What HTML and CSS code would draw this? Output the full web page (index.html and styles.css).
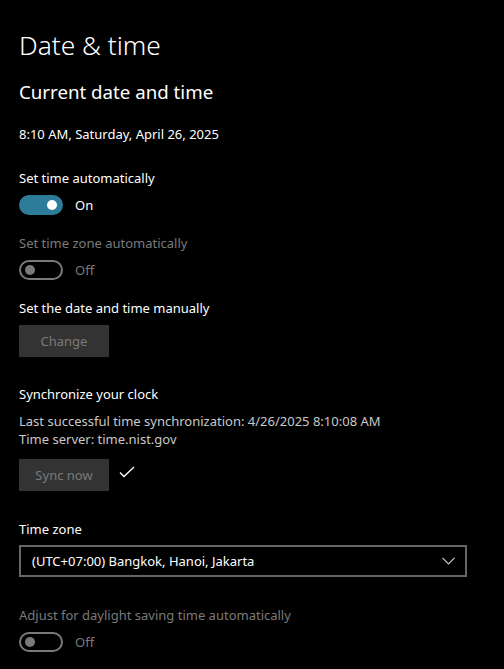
FILE: index.html
```html
<!DOCTYPE html>
<html lang="en">
<head>
  <meta charset="UTF-8" />
  <title>Date &amp; time</title>
  <link rel="stylesheet" href="styles.css">
</head>
<body>
  <main class="page">
    <h1 class="page-title">Date &amp; time</h1>

    <section class="group">
      <h2 class="group-title">Current date and time</h2>
      <p class="now">8:10 AM, Saturday, April 26, 2025</p>
    </section>

    <!-- Automatic settings -->
    <div class="setting">
      <div class="label">Set time automatically</div>
      <div class="toggle-row">
        <span class="toggle on"><span class="knob"></span></span>
        <span class="state">On</span>
      </div>
    </div>

    <div class="setting disabled">
      <div class="label">Set time zone automatically</div>
      <div class="toggle-row">
        <span class="toggle"><span class="knob"></span></span>
        <span class="state">Off</span>
      </div>
    </div>

    <div class="setting">
      <div class="label">Set the date and time manually</div>
      <button class="btn" disabled>Change</button>
    </div>

    <!-- Sync -->
    <div class="setting sync">
      <div class="label">Synchronize your clock</div>
      <div class="info">
        <div>Last successful time synchronization: 4/26/2025 8:10:08 AM</div>
        <div>Time server: time.nist.gov</div>
      </div>
      <div class="btn-row">
        <button class="btn" disabled>Sync now</button>
        <svg class="check" width="16" height="12" viewBox="0 0 16 12">
          <path d="M1 6.5 L5 10.5 L15 1" fill="none" stroke="#fff" stroke-width="1.3"/>
        </svg>
      </div>
    </div>

    <div class="setting zone">
      <div class="label">Time zone</div>
      <div class="select">
        <span>(UTC+07:00) Bangkok, Hanoi, Jakarta</span>
        <svg width="13" height="8" viewBox="0 0 13 8">
          <path d="M0.5 0.8 L6.5 6.8 L12.5 0.8" fill="none" stroke="#c8c8c8" stroke-width="1.2"/>
        </svg>
      </div>
    </div>

    <div class="setting disabled last">
      <div class="label">Adjust for daylight saving time automatically</div>
      <div class="toggle-row">
        <span class="toggle"><span class="knob"></span></span>
        <span class="state">Off</span>
      </div>
    </div>
  </main>
</body>
</html>
```

FILE: styles.css
```css
*, *::before, *::after {
  box-sizing: border-box;
}
body {
  margin: 0;
  background: #000;
  color: #fff;
  font-family: "Noto Sans", "Open Sans", sans-serif;
  font-size: 13px;
  line-height: 20px;
  overflow: hidden;
}

.page {
  padding: 25px 19px 0;
}

.page-title {
  margin: 0;
  font-size: 26.3px;
  font-weight: 300;
  line-height: 40px;
}

.group-title {
  margin: 13px 0 0;
  font-size: 18.7px;
  font-weight: 400;
  line-height: 28px;
}

.now {
  margin: 18px 0 0;
}

/* Settings */
.setting {
  margin-top: 24px;
}
.setting + .setting {
  margin-top: 18px;
}
.setting.sync {
  margin-top: 27px;
}
.setting.zone {
  margin-top: 28px;
}
.setting.last {
  margin-top: 28px;
}
.label {
  line-height: 20px;
}
.disabled .label,
.disabled .state {
  color: #7a7a7a;
}

.toggle-row {
  display: flex;
  align-items: center;
  gap: 12px;
  margin-top: 7px;
}
.toggle {
  display: flex;
  align-items: center;
  width: 44px;
  height: 20px;
  border: 2px solid #7a7a7a;
  border-radius: 10px;
  padding: 0 4px;
}
.toggle .knob {
  width: 10px;
  height: 10px;
  border-radius: 50%;
  background: #7a7a7a;
}
.toggle.on {
  background: #2d7d9a;
  border-color: #2d7d9a;
  justify-content: flex-end;
}
.toggle.on .knob {
  background: #fff;
}
.state {
  line-height: 20px;
}

/* Buttons */
.btn {
  display: block;
  margin-top: 7px;
  width: 90px;
  height: 32px;
  border: none;
  background: #333;
  color: #7a7a7a;
  font: inherit;
  padding: 0;
}
.btn-row {
  display: flex;
  align-items: center;
  gap: 10px;
  margin-top: 11px;
}
.btn-row .btn {
  margin-top: 0;
}
.check {
  margin-top: -6px;
}

.info {
  margin-top: 8px;
  color: #c8c8c8;
  line-height: 18px;
}

/* Dropdown */
.select {
  display: flex;
  align-items: center;
  justify-content: space-between;
  margin-top: 6px;
  width: 448px;
  height: 32px;
  border: 2px solid #666;
  padding: 0 10px 0 11px;
}
```
